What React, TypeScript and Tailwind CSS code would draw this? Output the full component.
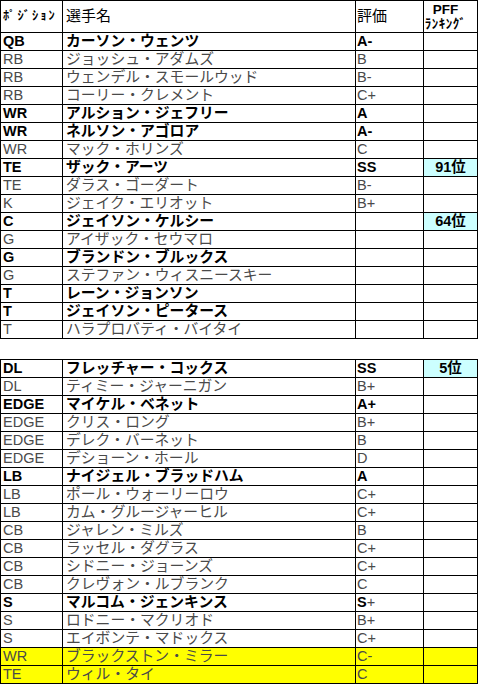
type Row = {
  pos: string;
  name: string;
  grade?: string;
  rank?: string;
  bold?: boolean;
  yellow?: boolean;
};

const offense: Row[] = [
  { pos: "QB", name: "カーソン・ウェンツ", grade: "A-", bold: true },
  { pos: "RB", name: "ジョッシュ・アダムズ", grade: "B" },
  { pos: "RB", name: "ウェンデル・スモールウッド", grade: "B-" },
  { pos: "RB", name: "コーリー・クレメント", grade: "C+" },
  { pos: "WR", name: "アルション・ジェフリー", grade: "A", bold: true },
  { pos: "WR", name: "ネルソン・アゴロア", grade: "A-", bold: true },
  { pos: "WR", name: "マック・ホリンズ", grade: "C" },
  { pos: "TE", name: "ザック・アーツ", grade: "SS", rank: "91位", bold: true },
  { pos: "TE", name: "ダラス・ゴーダート", grade: "B-" },
  { pos: "K", name: "ジェイク・エリオット", grade: "B+" },
  { pos: "C", name: "ジェイソン・ケルシー", rank: "64位", bold: true },
  { pos: "G", name: "アイザック・セウマロ" },
  { pos: "G", name: "ブランドン・ブルックス", bold: true },
  { pos: "G", name: "ステファン・ウィスニースキー" },
  { pos: "T", name: "レーン・ジョンソン", bold: true },
  { pos: "T", name: "ジェイソン・ピータース", bold: true },
  { pos: "T", name: "ハラプロバティ・バイタイ" },
];

const defense: Row[] = [
  { pos: "DL", name: "フレッチャー・コックス", grade: "SS", rank: "5位", bold: true },
  { pos: "DL", name: "ティミー・ジャーニガン", grade: "B+" },
  { pos: "EDGE", name: "マイケル・ベネット", grade: "A+", bold: true },
  { pos: "EDGE", name: "クリス・ロング", grade: "B+" },
  { pos: "EDGE", name: "デレク・バーネット", grade: "B" },
  { pos: "EDGE", name: "デショーン・ホール", grade: "D" },
  { pos: "LB", name: "ナイジェル・ブラッドハム", grade: "A", bold: true },
  { pos: "LB", name: "ポール・ウォーリーロウ", grade: "C+" },
  { pos: "LB", name: "カム・グルージャーヒル", grade: "C+" },
  { pos: "CB", name: "ジャレン・ミルズ", grade: "B" },
  { pos: "CB", name: "ラッセル・ダグラス", grade: "C+" },
  { pos: "CB", name: "シドニー・ジョーンズ", grade: "C+" },
  { pos: "CB", name: "クレヴォン・ルブランク", grade: "C" },
  { pos: "S", name: "マルコム・ジェンキンス", grade: "S+", bold: true },
  { pos: "S", name: "ロドニー・マクリオド", grade: "B+" },
  { pos: "S", name: "エイボンテ・マドックス", grade: "C+" },
  { pos: "WR", name: "ブラックストン・ミラー", grade: "C-", yellow: true },
  { pos: "TE", name: "ウィル・タイ", grade: "C", yellow: true },
];

function Cols() {
  return (
    <colgroup>
      <col className="w-[62px]" />
      <col className="w-[293px]" />
      <col className="w-[68px]" />
      <col className="w-[54px]" />
    </colgroup>
  );
}

function Grade({ r }: { r: Row }) {
  if (!r.grade) return null;
  // S+ : only the letter is bold in the sheet
  if (r.grade === "S+") {
    return (
      <>
        <span className="font-bold text-black">S</span>+
      </>
    );
  }
  return <>{r.grade}</>;
}

function BodyRow({ r, h }: { r: Row; h: string }) {
  const tone = r.bold ? "font-bold text-black" : "font-normal text-[#4a4a4a]";
  const bg = r.yellow ? "bg-[#ffff00]" : "bg-white";
  return (
    <tr className={`${h} ${bg}`}>
      <td className={`border border-black pl-[2px] p-0 text-[14.5px] leading-[17px] ${tone}`}>{r.pos}</td>
      <td className={`border border-black pl-[3px] p-0 text-[14.8px] leading-[17px] whitespace-nowrap ${tone}`}>{r.name}</td>
      <td className={`border border-black pl-[1px] p-0 text-[14.5px] leading-[17px] ${r.grade === "S+" ? "font-normal text-[#4a4a4a]" : tone}`}>
        <Grade r={r} />
      </td>
      <td
        className={`border border-black p-0 text-center text-[14.5px] leading-[17px] font-bold text-black ${
          r.rank ? "bg-[#ccffff]" : ""
        }`}
      >
        {r.rank}
      </td>
    </tr>
  );
}

export default function App() {
  return (
    <div
      className="w-[481px] h-[696px] bg-white overflow-hidden"
      style={{ fontFamily: '"Liberation Sans", "Noto Sans CJK JP", sans-serif' }}
    >
      <table className="table-fixed border-collapse w-[478px]">
        <Cols />
        <tbody>
          <tr className="h-[32px]">
            <td className="border border-black p-0 pl-[2px] text-[12.5px] font-bold tracking-[2px] text-black whitespace-nowrap">
              ﾎﾟｼﾞｼｮﾝ
            </td>
            <td className="border border-black p-0 pl-[3px] text-[15px] text-black">選手名</td>
            <td className="border border-black p-0 pl-[1px] text-[15px] text-black">評価</td>
            <td className="border border-black p-0 pr-[10px] text-center align-top text-black">
              <div className="text-[13.5px] font-bold leading-[14px] pt-[2px]">PFF</div>
              <div className="text-[13px] font-bold tracking-[0.5px] leading-[14px] whitespace-nowrap">ﾗﾝｷﾝｸﾞ</div>
            </td>
          </tr>
          {offense.map((r, i) => (
            <BodyRow key={i} r={r} h="h-[18px]" />
          ))}
        </tbody>
      </table>

      <table className="table-fixed border-collapse w-[478px] mt-[20px]">
        <Cols />
        <tbody>
          {defense.map((r, i) => (
            <BodyRow key={i} r={r} h="h-[17.85px]" />
          ))}
        </tbody>
      </table>
    </div>
  );
}
